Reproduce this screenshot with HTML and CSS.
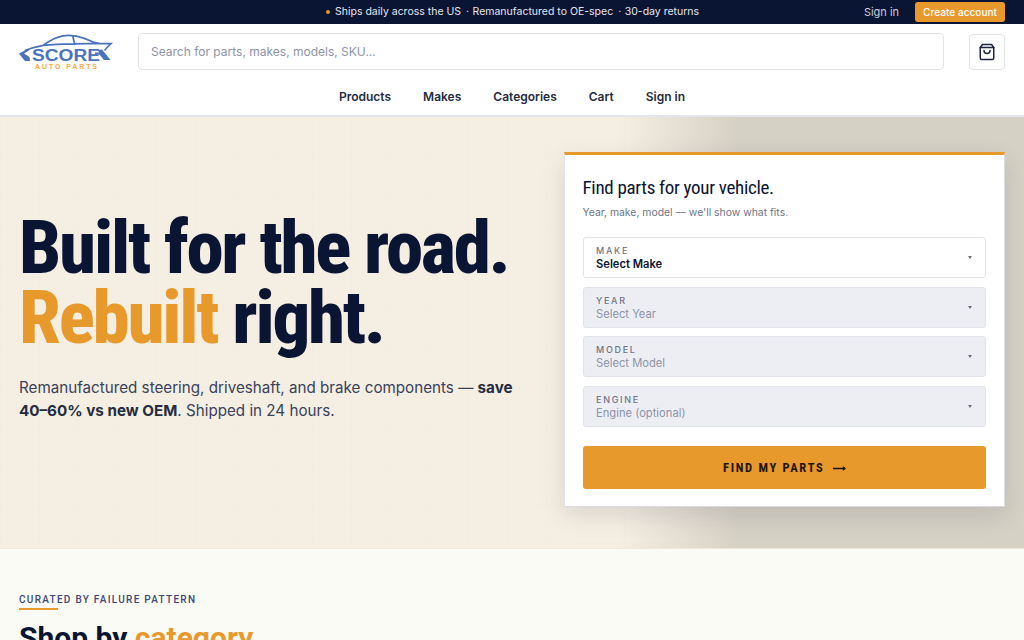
FILE: index.html
```html
<!DOCTYPE html>
<html lang="en">
<head>
<meta charset="utf-8">
<title>Score Auto Parts</title>
<link rel="stylesheet" href="styles.css">
</head>
<body>
<div class="topbar">
  <div class="topbar-msg"><span class="dot"></span>Ships daily across the US<span class="sep">·</span>Remanufactured to OE-spec<span class="sep">·</span>30-day returns</div>
  <div class="topbar-actions"><a class="top-signin">Sign in</a><a class="top-create">Create account</a></div>
</div>
<header class="header">
  <div class="header-row">
    <a class="logo">
      <svg class="logo-svg" width="94" height="36" viewBox="0 0 94 36">
        <path class="car-line" d="M6 16.5 C12 14 18 12.5 24.3 11.3 C30 7 37 3 44 1.8 C51 .7 59 2 66 4.6 L74 8 L81 9.7 L92 9.7 L88 13.5 L85.5 16.5 M24.3 11.3 C42 9.6 62 9.4 81 9.7 M53.7 2.2 L56 11"/>
        <path class="car" d="M0 19.7 L8.5 14.8 L10 16.5 L5 19.5 L10.5 23 L11 27 L6 27 Z M79 16 L83 15.5 L91.5 26 L85 26 L80.5 20.5 L76 20.5 L76 18.5 L80 18.5 Z"/>
        <text class="logo-score" x="13" y="27" textLength="68" lengthAdjust="spacingAndGlyphs">SCORE</text>
        <text class="logo-auto" x="16" y="35" textLength="62">AUTO PARTS</text>
      </svg>
    </a>
    <div class="search">Search for parts, makes, models, SKU...</div>
    <button class="cart-btn" aria-label="Cart">
      <svg width="18" height="18" viewBox="0 0 24 24" fill="none" stroke="#1d2540" stroke-width="2" stroke-linecap="round" stroke-linejoin="round"><path d="M6 2 3 6v14a2 2 0 0 0 2 2h14a2 2 0 0 0 2-2V6l-3-4Z"/><path d="M3 6h18"/><path d="M16 10a4 4 0 0 1-8 0"/></svg>
    </button>
  </div>
  <nav class="nav"><a>Products</a><a>Makes</a><a>Categories</a><a>Cart</a><a>Sign in</a></nav>
</header>
<main>
  <section class="hero">
    <div class="hero-copy">
      <h1>Built for the road.<br><span class="accent">Rebuilt</span> right.</h1>
      <p>Remanufactured steering, driveshaft, and brake components — <b>save 40–60% vs new OEM</b>. Shipped in 24 hours.</p>
    </div>
    <form class="finder">
      <h2>Find parts for your vehicle.</h2>
      <p class="finder-sub">Year, make, model — we'll show what fits.</p>
      <div class="fields">
        <div class="field active"><div><label>MAKE</label><span class="val">Select Make</span></div><i class="caret"></i></div>
        <div class="field"><div><label>YEAR</label><span class="val">Select Year</span></div><i class="caret"></i></div>
        <div class="field"><div><label>MODEL</label><span class="val">Select Model</span></div><i class="caret"></i></div>
        <div class="field"><div><label>ENGINE</label><span class="val">Engine (optional)</span></div><i class="caret"></i></div>
      </div>
      <button type="button" class="find-btn">FIND MY PARTS<svg class="arrow" width="13" height="7" viewBox="0 0 13 7" fill="none" stroke="#1f1404" stroke-width="1.3"><path d="M0 3.5H12M10 1.7 12 3.5 10 5.3"/></svg></button>
    </form>
  </section>
  <section class="cats">
    <div class="cats-head">
      <div>
        <div class="eyebrow">CURATED BY FAILURE PATTERN</div>
        <h2>Shop by <span class="accent">category</span></h2>
      </div>
      <a class="view-all">VIEW ALL CATEGORIES</a>
    </div>
  </section>
</main>
</body>
</html>
```
FILE: styles.css
```css
* { box-sizing: border-box; }
html, body { margin: 0; padding: 0; }
body { font-family: Inter, "Liberation Sans", sans-serif; color: #0a1433; background: #fbfbf6; overflow: hidden; height: 640px; }
a { text-decoration: none; color: inherit; }

.topbar { height: 24px; background: #0a1433; position: relative; display: flex; align-items: center; justify-content: flex-end; padding: 0 19px; }
.topbar-msg { position: absolute; left: 326px; top: 0; line-height: 24px; font-size: 10.5px; color: #e4e6ee; white-space: nowrap; }
.dot { display: inline-block; width: 4px; height: 4px; border-radius: 50%; background: #e8992c; margin-right: 5px; vertical-align: 1px; }
.sep { margin: 0 3.5px 0 5px; }
.topbar-actions { display: flex; align-items: center; gap: 16px; }
.top-signin { font-size: 11px; color: #c9cddb; }
.top-create { background: #e8992c; color: #fff; font-size: 10.1px; font-weight: 500; height: 20px; line-height: 20px; padding: 0 8px; border-radius: 3px; }

.header { background: #fff; height: 93px; border-bottom: 2px solid #e3e5ee; }
.header-row { display: flex; align-items: center; padding: 0 19px; height: 55px; }
.logo { width: 119px; flex: none; display: flex; }
.logo-svg { display: block; overflow: visible; }
.car { fill: #4a72bd; }
.car-line { fill: none; stroke: #4a72bd; stroke-width: 1.7; }
.logo-score { font-family: "Liberation Sans", sans-serif; font-size: 16px; font-weight: 700; fill: #4a72bd; }
.logo-auto { font-family: "Liberation Sans", sans-serif; font-size: 7px; font-weight: 700; fill: #f5ab3e; }
.search { flex: 1; height: 37px; border: 1px solid #e1e3ec; border-radius: 4px; padding: 0 12px; line-height: 35px; font-size: 12px; color: #8d93a8; }
.cart-btn { width: 36px; height: 36px; margin-left: 25px; border: 1px solid #e1e3ec; border-radius: 4px; background: #fff; display: flex; align-items: center; justify-content: center; padding: 0; }
.nav { display: flex; justify-content: center; gap: 32px; font-size: 12px; font-weight: 600; color: #252c42; line-height: 20px; padding-top: 8px; }

.hero { height: 432px; padding: 35px 19px 0; display: flex; justify-content: space-between; background-color: #f5efe3; background-image: linear-gradient(90deg, rgba(214,209,197,0) 60.5%, #d6d1c5 72%), linear-gradient(rgba(10,20,51,.006) 1px, transparent 1px), linear-gradient(90deg, rgba(10,20,51,.006) 1px, transparent 1px); background-size: auto, 39px 39px, 39px 39px; background-position: 0 0, 0 36px, 0 0; border-bottom: 1px solid #f0e8d9; }
.hero-copy { width: 510px; padding-top: 60px; }
.hero h1 { margin: 0; font-family: Roboto, sans-serif; font-stretch: 75%; font-weight: 800; font-size: 75px; line-height: 70px; letter-spacing: -2.25px; color: #0a1433; white-space: nowrap; }
.accent { color: #e8992c; }
.hero-copy p { margin: 24px 0 0; font-size: 15.2px; line-height: 23px; color: #3a415a; }
.hero-copy b { font-weight: 700; color: #252c42; }

.finder { width: 441px; height: 355px; background: #fff; border-top: 3px solid #e8992c; border-left: 1px solid #e3e5ee; border-right: 1px solid #d9dbe4; border-bottom: 1px solid #d9dbe4; padding: 20px 18px 0 17.5px; box-shadow: 0 8px 24px rgba(10,20,51,.12); }
.finder h2 { margin: 0; font-family: Roboto, sans-serif; font-stretch: 75%; font-weight: 400; font-size: 19px; line-height: 26px; letter-spacing: -.3px; color: #0a1433; }
.finder-sub { margin: 4px 0 0; font-size: 10.4px; line-height: 16px; color: #6d7389; }
.fields { margin-top: 16px; display: flex; flex-direction: column; gap: 8.5px; }
.field { height: 41px; border: 1px solid #e1e3ec; border-radius: 3px; background: #edeef4; padding: 6px 13px 0 12.5px; display: flex; justify-content: space-between; }
.field.active { background: #fff; }
.field label { display: block; font-size: 9px; line-height: 13px; font-weight: 500; letter-spacing: 1.7px; color: #6d7389; }
.val { display: block; font-size: 11.2px; line-height: 15px; color: #8d93a8; }
.active .val { font-weight: 600; color: #0a1433; }
.caret { width: 0; height: 0; margin-top: 12px; border-left: 2px solid transparent; border-right: 2px solid transparent; border-top: 3px solid #666c84; }
.find-btn { margin-top: 19px; width: 100%; height: 43px; border: 0; border-radius: 3px; background: #e8992c; color: #1f1404; font-family: Roboto, sans-serif; font-stretch: 87%; font-weight: 700; font-size: 12.5px; letter-spacing: 1.7px; display: flex; align-items: center; justify-content: center; gap: 8px; }
.arrow { margin-top: 2px; }

.cats { padding: 38px 19px 0; }
.cats-head { display: flex; justify-content: space-between; align-items: flex-end; }
.eyebrow { display: inline-block; font-family: Roboto, sans-serif; font-size: 10px; line-height: 13px; font-weight: 500; letter-spacing: 1.28px; color: #3c4873; }
.eyebrow::after { content: ""; display: block; width: 39px; height: 2px; margin-top: 2px; background: #e8992c; }
.cats h2 { margin: 10px 0 0; font-family: Roboto, sans-serif; font-weight: 700; font-size: 30px; line-height: 36px; color: #0a1433; }
.view-all { font-size: 10px; font-weight: 600; letter-spacing: .8px; color: #252c42; margin: 0 15px 0 0; }
```
